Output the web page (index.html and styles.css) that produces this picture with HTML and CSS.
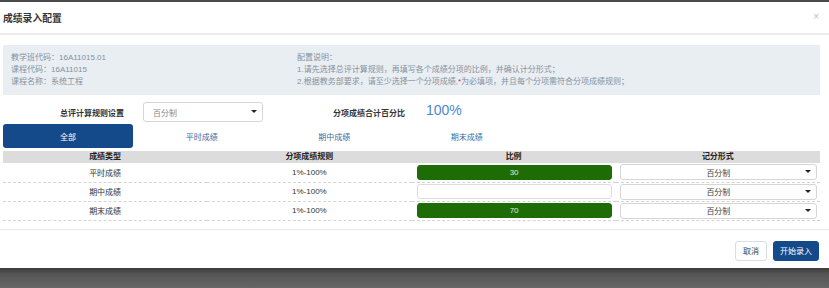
FILE: index.html
```html
<!DOCTYPE html>
<html lang="zh">
<head>
<meta charset="utf-8">
<title>成绩录入配置</title>
<link rel="stylesheet" href="styles.css">
</head>
<body>
<div class="modal">
  <div class="modal-header">
    <h4 class="modal-title">成绩录入配置</h4>
    <span class="close">×</span>
  </div>
  <div class="modal-body">
    <div class="info">
      <div class="info-col info-left">
        <p>教学班代码：16A11015.01</p>
        <p>课程代码：16A11015</p>
        <p>课程名称：系统工程</p>
      </div>
      <div class="info-col info-right">
        <p>配置说明：</p>
        <p>1.请先选择总评计算规则，再填写各个成绩分项的比例，并确认计分形式；</p>
        <p>2.根据教务部要求，请至少选择一个分项成绩,<span class="req">*</span>为必填项，并且每个分项需符合分项成绩规则；</p>
      </div>
    </div>
    <div class="rule-row">
      <label class="rule-label">总评计算规则设置</label>
      <div class="select rule-select"><span>百分制</span><span class="caret"></span></div>
      <label class="sum-label">分项成绩合计百分比</label>
      <span class="sum-value">100%</span>
    </div>
    <div class="tabs">
      <div class="tab active">全部</div>
      <div class="tab">平时成绩</div>
      <div class="tab">期中成绩</div>
      <div class="tab">期末成绩</div>
    </div>
    <table class="grid">
      <thead>
        <tr><th>成绩类型</th><th>分项成绩规则</th><th>比例</th><th>记分形式</th></tr>
      </thead>
      <tbody>
        <tr>
          <td>平时成绩</td><td>1%-100%</td>
          <td><div class="ratio filled">30</div></td>
          <td><div class="select cell-select"><span>百分制</span><span class="caret"></span></div></td>
        </tr>
        <tr>
          <td>期中成绩</td><td>1%-100%</td>
          <td><div class="ratio"></div></td>
          <td><div class="select cell-select"><span>百分制</span><span class="caret"></span></div></td>
        </tr>
        <tr>
          <td>期末成绩</td><td>1%-100%</td>
          <td><div class="ratio filled">70</div></td>
          <td><div class="select cell-select"><span>百分制</span><span class="caret"></span></div></td>
        </tr>
      </tbody>
    </table>
  </div>
  <div class="modal-footer">
    <button class="btn btn-default">取消</button>
    <button class="btn btn-primary">开始录入</button>
  </div>
</div>
</body>
</html>
```

FILE: styles.css
```css
* { box-sizing: border-box; }
html, body { margin: 0; padding: 0; }
body {
  width: 829px;
  height: 288px;
  overflow: hidden;
  background: linear-gradient(to bottom, #4a4a4a 0px, #4a4a4a 2px, #fff 2px, #fff 268px, #3a3a3a 268px, #555 274px, #666 288px);
  font-family: "Liberation Sans", "Noto Sans CJK SC", sans-serif;
  color: #333;
  padding-top: 2px;
}
.modal {
  background: #fff;
  height: 266px;
  display: flex;
  flex-direction: column;
}
.modal-header {
  height: 33px;
  border-bottom: 2px solid #ececec;
  display: flex;
  align-items: center;
  justify-content: space-between;
  padding: 0 10px 0 3px;
}
.modal-title {
  margin: 0;
  font-size: 9.8px;
  font-weight: bold;
  color: #333;
  padding-top: 1px;
}
.close {
  color: #bdbdbd;
  font-size: 10px;
  line-height: 1;
  margin-top: -2px;
}
.modal-body {
  padding: 10px 9px 0 3px;
  flex: 0 0 auto;
}
.info {
  background: #e9eef3;
  height: 50px;
  display: flex;
  padding: 7px 8px 0 8px;
  font-size: 8px;
  color: #8592a1;
}
.info p { margin: 0; line-height: 12px; white-space: nowrap; }
.info-left { width: 286px; }
.req { color: #e8262a; }
.rule-row {
  display: flex;
  align-items: center;
  height: 20px;
  margin-top: 7px;
  font-size: 8px;
}
.rule-label {
  width: 140px;
  text-align: right;
  padding-right: 19px;
  font-weight: bold;
  color: #333;
}
.select {
  border: 1px solid #d6d6d6;
  border-radius: 3px;
  background: #fff;
  display: flex;
  align-items: center;
  position: relative;
  font-size: 8px;
  color: #555;
}
.caret {
  position: absolute;
  right: 5px;
  top: 50%;
  margin-top: -2px;
  width: 0; height: 0;
  border-left: 3px solid transparent;
  border-right: 3px solid transparent;
  border-top: 3.5px solid #222;
}
.rule-select {
  width: 120px;
  height: 20px;
  padding-left: 9px;
  color: #888;
}
.sum-label {
  margin-left: 70px;
  font-weight: bold;
  color: #333;
  width: 93px;
}
.sum-value {
  color: #4a88cf;
  font-size: 14px;
  margin-top: -4px;
}
.tabs {
  display: flex;
  margin-top: 2px;
  height: 24px;
}
.tab {
  width: 132.5px;
  display: flex;
  align-items: center;
  justify-content: center;
  font-size: 8px;
  color: #3c6aa3;
}
.tab.active {
  background: #144a8a;
  color: #fff;
  border-radius: 3px;
  width: 130px;
  margin-right: 2.5px;
}
.grid {
  width: 817px;
  margin-top: 3px;
  border-collapse: collapse;
  table-layout: fixed;
  font-size: 8px;
}
.grid th {
  background: #dcdcdc;
  height: 12px;
  padding: 0;
  font-weight: bold;
  color: #222;
  line-height: 12px;
  text-align: center;
}
.grid td {
  height: 19px;
  padding: 0 4px 0 4px;
  text-align: center;
  border-bottom: 1px dashed #d4d4d4;
  color: #333;
}
.ratio {
  height: 15px;
  border: 1px solid #ddd;
  border-radius: 3px;
  background: #fff;
  color: #e3eedc;
  font-size: 8px;
  line-height: 13px;
  margin-left: 1px;
}
.ratio.filled {
  background: #1e6c06;
  border-color: #1e6c06;
}
.cell-select {
  height: 16px;
  justify-content: center;
  color: #444;
  margin-right: -1px;
}
.modal-footer {
  margin-top: 8px;
  border-top: 1px solid #e8e8e8;
  flex: 1;
  display: flex;
  justify-content: flex-end;
  align-items: flex-start;
  padding: 11px 10px 0 0;
  gap: 6px;
}
.btn {
  height: 20px;
  border-radius: 3px;
  font-family: "Liberation Sans", "Noto Sans CJK SC", sans-serif;
  font-size: 8px;
  padding: 0;
  cursor: pointer;
}
.btn-default {
  width: 32px;
  background: #fff;
  border: 1px solid #d5dde6;
  color: #444;
}
.btn-primary {
  width: 46px;
  background: #144a8a;
  border: 1px solid #144a8a;
  color: #fff;
}
```
